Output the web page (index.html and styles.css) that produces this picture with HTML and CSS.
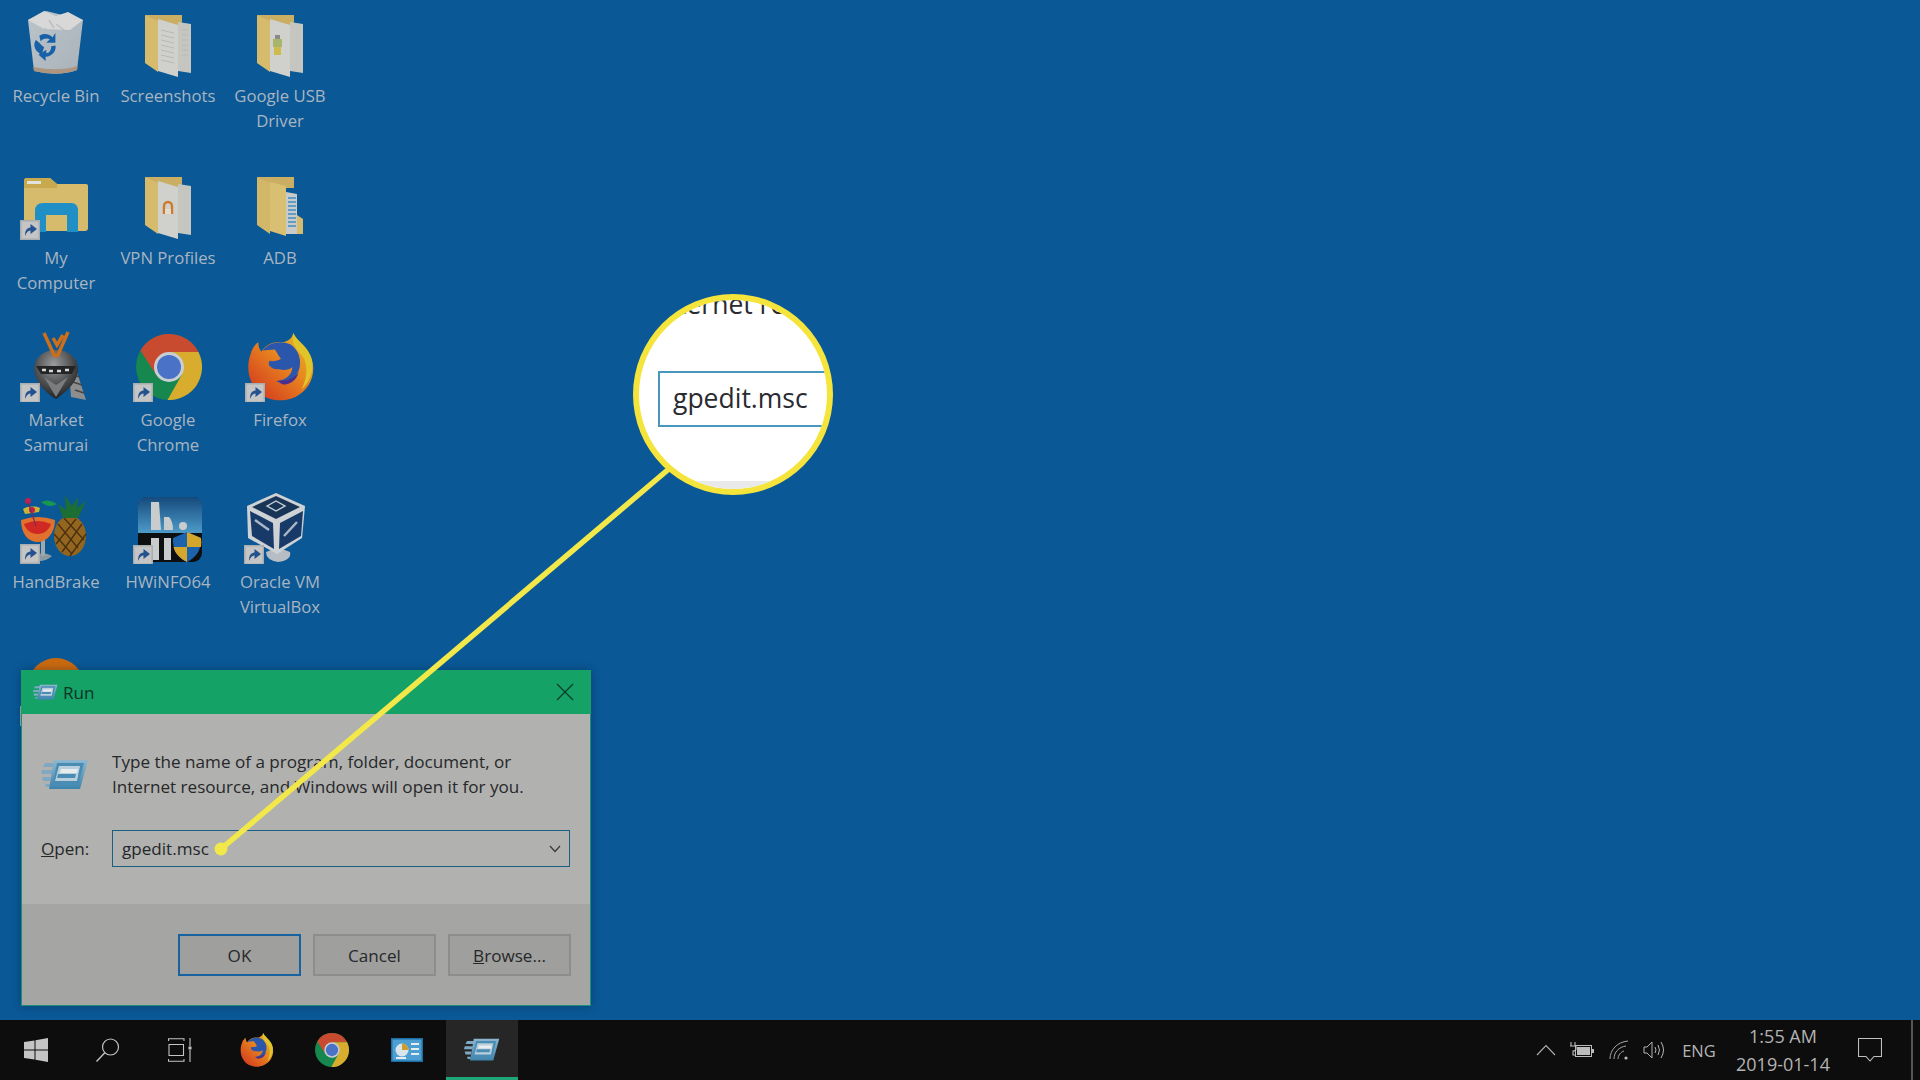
FILE: index.html
```html
<!DOCTYPE html>
<html lang="en">
<head>
<meta charset="utf-8">
<title>Run dialog</title>
<link rel="stylesheet" href="styles.css">
</head>
<body>
<svg class="defs" aria-hidden="true">
  <defs>
    <linearGradient id="fxBody" x1="1" y1="0" x2="0.1" y2="1"><stop offset="0" stop-color="#e3c22c"/><stop offset=".45" stop-color="#e8871f"/><stop offset="1" stop-color="#d2341f"/></linearGradient>
    <linearGradient id="hwTop" x1="0" y1="0" x2="0" y2="1"><stop offset="0" stop-color="#154a7c"/><stop offset="1" stop-color="#4d9bc9"/></linearGradient>
    <linearGradient id="runFace" x1="0" y1="0" x2="0" y2="1"><stop offset="0" stop-color="#8fb7cf"/><stop offset="1" stop-color="#3e84ad"/></linearGradient>
    <radialGradient id="helmet" cx=".45" cy=".3" r=".7"><stop offset="0" stop-color="#9b9c9d"/><stop offset=".6" stop-color="#4d4e50"/><stop offset="1" stop-color="#1f2022"/></radialGradient>
    <linearGradient id="binGlass" x1="0" y1="0" x2="1" y2="1"><stop offset="0" stop-color="#bcc4ca"/><stop offset="1" stop-color="#a9b2ba"/></linearGradient>
    <symbol id="shortcut" viewBox="0 0 20 20">
      <rect width="20" height="20" fill="#a9adb0"/>
      <rect x="1.500" y="1.500" width="17" height="17" fill="#c4c5c4"/>
      <path d="M5 16C5 10 7 8 10.500 7.500V4L17 9l-6.500 5v-3.500C8.500 10.500 6.500 12 5 16z" fill="#24528f"/>
    </symbol>
    <symbol id="folderBase" viewBox="0 0 80 72">
      <path d="M17 9H54V20H30z" fill="#c9ae63"/>
      <path d="M50 16l13 2V67L50 65z" fill="#c6c6c1"/>
      <path d="M30 13l20 6V71L30 65z" fill="#d0d1cc"/>
      <path d="M17 9l13 6V66L17 57z" fill="#d6bb6d"/>
    </symbol>
    <symbol id="firefox" viewBox="0 0 66 66">
      <path d="M45 0C46 6 57 12 62 23C68 38 62 55 47 62C32 69 14 65 6 51C0 41 0 29 4 19C5 15 8 11 11 9C11 13 12 16 14 18C18 11 27 8 35 9C40 8 44 5 45 0z" fill="url(#fxBody)"/>
      <path d="M15 17C21 9 33 7 42 11C50 16 54 27 50 37C47 45 37 50 28 47C38 46 44 40 44 33C40 37 34 36 27 35C21 33 20 30 22 27C25 28 30 27 33 25C30 22 29 18 27 16C23 16 18 17 15 17z" fill="#2a57ac"/>
      <path d="M45 0C49 9 60 13 63 26C65 38 61 47 53 55C60 40 59 27 51 19C46 14 43 8 45 0z" fill="#e0c52a"/>
      <path d="M30 46C38 47 46 44 50 38C48 46 42 50 35 50C33 49 31 48 30 46z" fill="#4b2f8e"/>
    </symbol>
    <symbol id="chrome" viewBox="0 0 66 66">
      <circle cx="33" cy="33" r="33" fill="#16874f"/>
      <path d="M33 18H62.400A33 33 0 0 0 4.400 16.500L20 40.500z" fill="#c94b2f"/>
      <path d="M33 18H62.400A33 33 0 0 1 31.500 66L46 40.500z" fill="#d8ad2d"/>
      <circle cx="33" cy="33" r="15" fill="#c9ced2"/>
      <circle cx="33" cy="33" r="12" fill="#4a72c6"/>
    </symbol>
    <symbol id="run" viewBox="0 0 48 32">
      <path d="M4 4H17L14 8H2zM1 11H12L11 15H0zM1 18H10L9 22H2zM4 25H9L9 28H5z" fill="#7fa9c3"/>
      <path d="M13 1H47L39 30H8z" fill="url(#runFace)"/>
      <path d="M16 4H43L37 27H11z" fill="#4a8db4"/>
      <path d="M18 7H39L36 22H14z" fill="#b9cfdb"/>
      <path d="M20 10H37L36 14H19z" fill="#e7ecef"/>
      <path d="M17 15H35L34 19H16z" fill="#4a8db4"/>
    </symbol>
  </defs>
</svg>

<div class="screen">
  <main class="desktop">
    <div class="icons">
      <div class="item">
        <svg class="glyph" viewBox="0 0 80 72">
          <path d="M12 14L30 5L67 14L61 64Q42 71 18 65z" fill="url(#binGlass)"/>
          <path d="M12 14L28 5L40 10L52 6L67 14L54 24L28 23z" fill="#d7d8d7"/>
          <path d="M22 28L30 22M40 18L48 24M33 14L38 22" stroke="#bcbfc0" stroke-width="1.500"/>
          <g transform="translate(4.400 13) scale(.7)" fill="#1761a8">
            <path d="M22 30C28 34 30 38 34 40L30 52L26 48C20 44 18 36 22 30z"/>
            <path d="M27 24C33 20 40 21 46 26L50 20L50 34L37 34L42 29C37 27 32 28 29 32z"/>
            <path d="M50 38C52 44 46 54 36 54L36 60L26 51L37 44L37 49C41 49 44 45 44 39z"/>
          </g>
          <path d="M18 65Q42 71 61 64L61.500 60Q42 66 17.500 61z" fill="#ad957f"/>
        </svg>
        <span class="label">Recycle Bin</span>
      </div>
      <div class="item">
        <svg class="glyph" viewBox="0 0 80 72">
          <use href="#folderBase"/>
          <path d="M33 24l13 3M33 29l13 3M33 34l13 3M33 39l13 3M33 44l13 3M33 49l13 3M33 54l13 3M54 24h6M54 29h6M54 34h6M54 39h6M54 44h6M54 49h6" stroke="#b8b8b4" stroke-width="1"/>
        </svg>
        <span class="label">Screenshots</span>
      </div>
      <div class="item">
        <svg class="glyph" viewBox="0 0 80 72">
          <use href="#folderBase"/>
          <rect x="33" y="33" width="9" height="8" fill="#a9b56a"/>
          <rect x="34" y="41" width="7" height="8" fill="#cdbb4e"/>
          <rect x="35" y="29" width="5" height="4" fill="#8a8a88"/>
        </svg>
        <span class="label">Google USB Driver</span>
      </div>

      <div class="item">
        <svg class="glyph" viewBox="0 0 80 72">
          <path d="M8 13Q8 10 11 10H34L41 16H70Q72 16 72 18V60Q72 63 69 63H11Q8 63 8 60z" fill="#d6bb6d"/>
          <path d="M8 13Q8 10 11 10H34L41 16V20H8z" fill="#c9a94d"/>
          <rect x="11" y="13" width="14" height="3" fill="#dfe3dc"/>
          <path d="M19 64V43Q19 35 27 35H55Q62 35 62 43V64H51V47H30V64z" fill="#1f8fc5"/>
          <rect x="30" y="47" width="21" height="14" fill="#d6bb6d"/>
          <use href="#shortcut" x="4" y="52" width="20" height="20"/>
        </svg>
        <span class="label">My Computer</span>
      </div>
      <div class="item">
        <svg class="glyph" viewBox="0 0 80 72">
          <use href="#folderBase"/>
          <path d="M36 46V38a4 4 0 0 1 8 0V46" fill="none" stroke="#cf7a2a" stroke-width="2.400"/>
          <rect x="37" y="41" width="6" height="5" fill="#e0ddd0"/>
        </svg>
        <span class="label">VPN Profiles</span>
      </div>
      <div class="item">
        <svg class="glyph" viewBox="0 0 80 72">
          <path d="M17 9H54V20H30z" fill="#c9ae63"/>
          <path d="M46 24l11 2V66L46 66z" fill="#c9cbc8"/>
          <path d="M48 30h8M48 34h8M48 38h8M48 42h8M48 46h8M48 50h8M48 54h8M48 58h8" stroke="#3f8fc4" stroke-width="1.400"/>
          <path d="M57 47l6 4V66H57z" fill="#d6bb6d"/>
          <path d="M30 14l16 4V68L30 63z" fill="#d9bf72"/>
          <path d="M17 9l13 6V66L17 57z" fill="#d3b768"/>
        </svg>
        <span class="label">ADB</span>
      </div>

      <div class="item">
        <svg class="glyph" viewBox="0 0 80 72">
          <path d="M52 28L59 36L70 70L55 67z" fill="#8c8d8c"/>
          <path d="M55 44l9 3M57 52l9 3M59 60l9 3" stroke="#454545" stroke-width="1.500"/>
          <path d="M18 40C18 27 28 20 40 20C52 20 62 27 62 40C62 50 53 60 40 69C28 62 19 50 18 40z" fill="url(#helmet)"/>
          <path d="M20 36H60L56 44H25z" fill="#232425"/>
          <path d="M26 40h4M33 41h4M41 41h4M49 40h4" stroke="#d8d8d6" stroke-width="2.500"/>
          <path d="M28 47L40 67L52 47L40 55z" fill="#7b7c7d"/>
          <path d="M28 3L39 27M52 2L41 27M37 8L41 15L47 5" fill="none" stroke="#cd6e1a" stroke-width="3.500"/>
          <use href="#shortcut" x="4" y="53" width="20" height="20"/>
        </svg>
        <span class="label">Market Samurai</span>
      </div>
      <div class="item">
        <svg class="glyph" viewBox="0 0 80 72">
          <use href="#chrome" x="8" y="4" width="66" height="66"/>
          <use href="#shortcut" x="5" y="53" width="20" height="20"/>
        </svg>
        <span class="label">Google Chrome</span>
      </div>
      <div class="item">
        <svg class="glyph" viewBox="0 0 80 72">
          <use href="#firefox" x="7" y="3" width="68" height="68"/>
          <use href="#shortcut" x="5" y="53" width="20" height="20"/>
        </svg>
        <span class="label">Firefox</span>
      </div>

      <div class="item">
        <svg class="glyph" viewBox="0 0 80 72">
          <path d="M22 62Q30 60 36 64Q30 70 20 69Q12 67 22 62z" fill="#8a9aa3"/>
          <path d="M25 48h4v16h-4z" fill="#9fa8ab"/>
          <path d="M5 28Q22 22 39 28C39 42 30 50 22 50C12 50 5 42 5 28z" fill="#e0722e"/>
          <path d="M8 32Q22 26 35 32C33 38 28 42 22 42C15 42 10 38 8 32z" fill="#d02924"/>
          <path d="M7 17C12 14 20 14 24 16L23 20L9 22z" fill="#c6b533"/>
          <circle cx="12" cy="9" r="3" fill="#c2204f"/>
          <circle cx="16" cy="18" r="3" fill="#c2204f"/>
          <path d="M12 10L20 34" stroke="#7d2a52" stroke-width="1.200"/>
          <path d="M25 10Q33 6 41 12Q33 17 25 10z" fill="#179750"/>
          <ellipse cx="54" cy="44" rx="16" ry="20" fill="#94651f"/>
          <path d="M42 32l20 24M38 42l18 20M48 26l20 22M66 32L46 60M60 27L40 52M70 42L54 64" stroke="#48300f" stroke-width="1.300"/>
          <path d="M47 26L42 12L50 18L49 3L56 14L62 5L61 16L70 9L62 26z" fill="#1c6e35"/>
          <use href="#shortcut" x="4" y="52" width="20" height="20"/>
        </svg>
        <span class="label">HandBrake</span>
      </div>
      <div class="item">
        <svg class="glyph" viewBox="0 0 80 72">
          <rect x="10" y="5" width="64" height="65" rx="9" fill="#0e0f10"/>
          <path d="M10 41V14Q10 5 19 5H65Q74 5 74 14V41z" fill="url(#hwTop)"/>
          <path d="M23 10H31L33 38H23zM36 25H41Q45 29 45 38H36z" fill="#c9cccd"/>
          <path d="M23 46H31V68H23zM36 46H43V68H36z" fill="#c9cccd"/>
          <circle cx="55" cy="34" r="4" fill="#c9cccd"/>
          <path d="M59 40L73 46C74 57 68 66 59 70C50 66 44 57 45 46z" fill="#1b63ad"/>
          <path d="M59 40L73 46C73.500 49 73.500 52 73 55H59zM59 55V70C53 67 47 62 45.500 55z" fill="#d4a62c"/>
          <use href="#shortcut" x="5" y="53" width="20" height="20"/>
        </svg>
        <span class="label">HWiNFO64</span>
      </div>
      <div class="item">
        <svg class="glyph" viewBox="0 0 80 72">
          <path d="M26 60Q38 54 50 60Q52 68 38 70Q26 68 26 60z" fill="#b6bdc4"/>
          <path d="M36 1L65 14L62 46L37 62L8 46L7 14z" fill="#cfd2d5"/>
          <path d="M36 4L60 15L36 27L12 15z" fill="#183558"/>
          <path d="M10 19L33 31L34 57L12 44z" fill="#173a68"/>
          <path d="M63 19L40 31L39 57L61 44z" fill="#173a68"/>
          <path d="M27 14L36 9L45 14L36 19z" fill="none" stroke="#c9d0d8" stroke-width="1.400"/>
          <path d="M15 28L29 38M44 44L57 30" stroke="#aab6c4" stroke-width="2.500"/>
          <use href="#shortcut" x="4" y="53" width="20" height="20"/>
        </svg>
        <span class="label">Oracle VM VirtualBox</span>
      </div>

      <div class="item">
        <svg class="glyph" viewBox="0 0 80 72">
          <circle cx="40" cy="32" r="28" fill="#c96a10"/>
          <use href="#shortcut" x="4" y="52" width="20" height="20"/>
        </svg>
        <span class="label">CCleaner</span>
      </div>
    </div>

    <section class="dialog">
      <header class="titlebar">
        <svg class="title-icon"><use href="#run"/></svg>
        <span class="title">Run</span>
        <svg class="close" viewBox="0 0 18 18"><path d="M1 1L17 17M17 1L1 17" stroke="#0c3b2a" stroke-width="1.200"/></svg>
      </header>
      <div class="body">
        <div class="prompt">
          <svg class="run-icon"><use href="#run"/></svg>
          <p class="prompt-text">Type the name of a program, folder, document, or<br>Internet resource, and Windows will open it for you.</p>
        </div>
        <div class="open-row">
          <span class="open-label"><u>O</u>pen:</span>
          <div class="field">
            <span class="field-value">gpedit.msc</span>
            <svg class="chevron" viewBox="0 0 12 8"><path d="M1 1L6 6.500L11 1" fill="none" stroke="#33393d" stroke-width="1.200"/></svg>
          </div>
        </div>
      </div>
      <footer class="actions">
        <button class="btn btn-default">OK</button>
        <button class="btn">Cancel</button>
        <button class="btn"><u>B</u>rowse...</button>
      </footer>
    </section>

    <svg class="pointer" viewBox="0 0 1920 1020">
      <path d="M221 849L670 468" stroke="#f2e84a" stroke-width="5.500"/>
      <circle cx="221" cy="849" r="6.500" fill="#f2e84a"/>
    </svg>

    <div class="callout">
      <div class="callout-top">ternet re</div>
      <div class="callout-field">gpedit.msc</div>
      <div class="callout-band"></div>
    </div>
  </main>

  <nav class="taskbar">
    <div class="task task-sm">
      <svg class="tb-icon" viewBox="0 0 24 24"><path d="M0 4L10.500 2.500V11.500H0zM11.500 2.300L24 0V11.500H11.500zM0 12.500H10.500V21.500L0 20zM11.500 12.500H24V24L11.500 21.700z" fill="#c4c4c4"/></svg>
    </div>
    <div class="task task-sm">
      <svg class="tb-icon" viewBox="0 0 24 24"><circle cx="14.500" cy="9" r="8" fill="none" stroke="#c4c4c4" stroke-width="1.200"/><path d="M8.800 14.700L0.500 23.500" stroke="#c4c4c4" stroke-width="1.400"/></svg>
    </div>
    <div class="task task-sm">
      <svg class="tb-icon" viewBox="0 0 24 24"><path d="M.5 3V.7H16V3M.5 21V23.300H16V21M1 6.500H15.500V17.500H1zM22 0V8M22 12V24" fill="none" stroke="#c4c4c4" stroke-width="1.100"/><rect x="20.500" y="8.500" width="3" height="3" fill="#c4c4c4"/></svg>
    </div>
    <div class="task task-fx"><svg class="tb-app"><use href="#firefox"/></svg></div>
    <div class="task task-chrome"><svg class="tb-app"><use href="#chrome"/></svg></div>
    <div class="task task-panel">
      <svg class="tb-panel" viewBox="0 0 32 24">
        <rect width="32" height="24" fill="#1d6ea6"/>
        <rect x="1.500" y="1.500" width="29" height="21" fill="#4c9fd0"/>
        <circle cx="11" cy="12" r="6.500" fill="#d8e6ec"/>
        <path d="M11 12V5.500A6.500 6.500 0 0 1 17.500 12z" fill="#d39a2d"/>
        <path d="M20 6h8M20 11h8M20 16h8M5 20h10" stroke="#e4eef3" stroke-width="2"/>
      </svg>
    </div>
    <div class="task task-active"><svg class="tb-run"><use href="#run"/></svg></div>

    <div class="tray">
      <div class="tray-cell tray-chevron"><svg class="tray-up" viewBox="0 0 20 12"><path d="M1 11L10 1.500L19 11" fill="none" stroke="#b0b0b0" stroke-width="1.100"/></svg></div>
      <div class="tray-cell tray-battery">
        <svg class="tray-bat" viewBox="0 0 24 18"><path d="M1 1v4M5 1v4M0 5h6v3Q6 10 3 10V14H6" fill="none" stroke="#bcbcbc" stroke-width="1.100"/><rect x="5.500" y="4.500" width="16" height="11" fill="none" stroke="#bcbcbc"/><rect x="7" y="6" width="13" height="8" fill="#bcbcbc"/><rect x="22" y="8" width="2" height="4" fill="#bcbcbc"/></svg>
      </div>
      <div class="tray-cell tray-wifi">
        <svg class="tray-w" viewBox="0 0 20 20"><g fill="none" stroke="#a8a8a8" stroke-width="1"><path d="M1 19C1 10 8 2 19 1"/><path d="M5 19C5 12 10 7 17 6"/><path d="M9 19C9 15 12 12 15 11"/></g><circle cx="17" cy="18" r="1.600" fill="#bcbcbc"/></svg>
      </div>
      <div class="tray-cell tray-vol">
        <svg class="tray-v" viewBox="0 0 22 18"><path d="M1 6H4L9 1V17L4 12H1z" fill="none" stroke="#b4b4b4"/><path d="M12 6Q14 9 12 12M15 4Q18 9 15 14M18 1Q23 9 18 17" fill="none" stroke="#b4b4b4"/></svg>
      </div>
      <div class="tray-cell tray-lang">ENG</div>
      <div class="tray-cell tray-clock"><span>1:55 AM</span><span>2019-01-14</span></div>
      <div class="tray-cell tray-notif">
        <svg class="tray-n" viewBox="0 0 24 24"><path d="M.5.500H23.500V18.500H16L12 23L8 18.500H.5z" fill="none" stroke="#c0c0c0" stroke-width="1.100"/></svg>
      </div>
      <div class="show-desktop"></div>
    </div>
  </nav>
</div>
</body>
</html>
```

FILE: styles.css
```css
* { box-sizing: border-box; }
html, body { margin: 0; padding: 0; }
body { width: 1920px; height: 1080px; overflow: hidden; background: #0a5896; font-family: "Open Sans", "Noto Sans", sans-serif; }
.defs { position: absolute; width: 0; height: 0; }
.screen { width: 1920px; height: 1080px; display: flex; flex-direction: column; }

.desktop { position: relative; height: 1020px; background: #0a5896; overflow: hidden; }
.icons { display: grid; grid-template-columns: repeat(3, 112px); grid-auto-rows: 162px; width: 336px; }
.item { display: flex; flex-direction: column; align-items: center; padding-top: 6px; }
.glyph { width: 80px; height: 72px; display: block; flex: none; }
.label { width: 100px; margin-top: 5px; text-align: center; font-size: 16.7px; line-height: 25px; color: #a9b5c0; }

.dialog { position: absolute; left: 21px; top: 670px; width: 570px; height: 336px; display: flex; flex-direction: column; border: 1px solid #1a9079; background: #b1b1af; box-shadow: 0 0 8px rgba(0,20,50,.35); color: #26282a; font-size: 17.1px; }
.titlebar { height: 44px; flex: none; display: flex; align-items: center; background: #14a266; padding: 0 17px 0 12px; margin: -1px -1px 0; }
.title-icon { width: 25px; height: 17px; }
.title { margin-left: 5px; color: #0c3326; flex: 1; }
.close { width: 18px; height: 18px; }
.body { flex: 1; padding: 35px 20px 0 19px; }
.prompt { display: flex; align-items: flex-start; }
.run-icon { width: 48px; height: 32px; margin-top: 10px; flex: none; }
.prompt-text { margin: 0 0 0 23px; line-height: 25px; white-space: nowrap; }
.open-row { display: flex; align-items: center; margin-top: 31px; }
.open-label { width: 71px; flex: none; }
.field { flex: 1; height: 37px; border: 1px solid #1b5f7f; display: flex; align-items: center; justify-content: space-between; padding: 0 8px 0 9px; }
.field-value { color: #23272a; }
.chevron { width: 12px; height: 8px; }
.actions { height: 101px; flex: none; display: flex; justify-content: flex-end; gap: 12px; padding: 30px 19px 0 0; background: #a5a5a3; }
.btn { width: 123px; height: 42px; border: 2px solid #8d8d8b; background: #9f9f9d; color: #26282a; font: inherit; padding: 0; }
.btn-default { border-color: #18629f; }

.pointer { position: absolute; left: 0; top: 0; width: 1920px; height: 1020px; pointer-events: none; }

.callout { position: absolute; left: 633px; top: 294px; width: 200px; height: 201px; border-radius: 50%; border: 6px solid #f5e43c; background: #fff; overflow: hidden; display: flex; flex-direction: column; color: #2a2a30; font-size: 26.5px; }
.callout-top { margin: -13px 0 0 38px; line-height: 34px; white-space: nowrap; }
.callout-field { margin: 50px -20px 0 19px; height: 56px; border: 2px solid #4a97bd; padding-left: 13px; line-height: 50px; }
.callout-band { margin-top: auto; height: 8px; background: #e9e9e9; }

.taskbar { height: 60px; flex: none; display: flex; align-items: stretch; background: #0d0d0d; }
.task { width: 75px; display: flex; align-items: center; justify-content: center; flex: none; }
.task-sm { width: 72px; }
.task-fx { width: 81px; }
.task-chrome { width: 70px; }
.task-panel { width: 79px; }
.task-active { width: 72px; background: #262626; border-bottom: 3px solid #1ea578; padding-top: 3px; }
.tb-icon { width: 24px; height: 24px; }
.tb-app { width: 34px; height: 34px; }
.tb-panel { width: 32px; height: 24px; }
.tb-run { width: 36px; height: 24px; }

.tray { margin-left: auto; display: flex; align-items: stretch; color: #b4b4b4; font-size: 16.5px; }
.tray-cell { display: flex; align-items: center; justify-content: center; flex: none; }
.tray-chevron { width: 36px; }
.tray-battery { width: 36px; }
.tray-wifi { width: 38px; }
.tray-vol { width: 32px; }
.tray-lang { width: 58px; }
.tray-clock { width: 110px; flex-direction: column; justify-content: flex-start; padding-top: 2px; line-height: 28px; font-size: 18px; }
.tray-notif { width: 64px; }
.tray-up { width: 20px; height: 12px; }
.tray-bat { width: 24px; height: 18px; }
.tray-w { width: 20px; height: 20px; }
.tray-v { width: 22px; height: 18px; }
.tray-n { width: 24px; height: 24px; }
.show-desktop { width: 2px; margin: 0 7px 0 9px; background: #555; }
```
